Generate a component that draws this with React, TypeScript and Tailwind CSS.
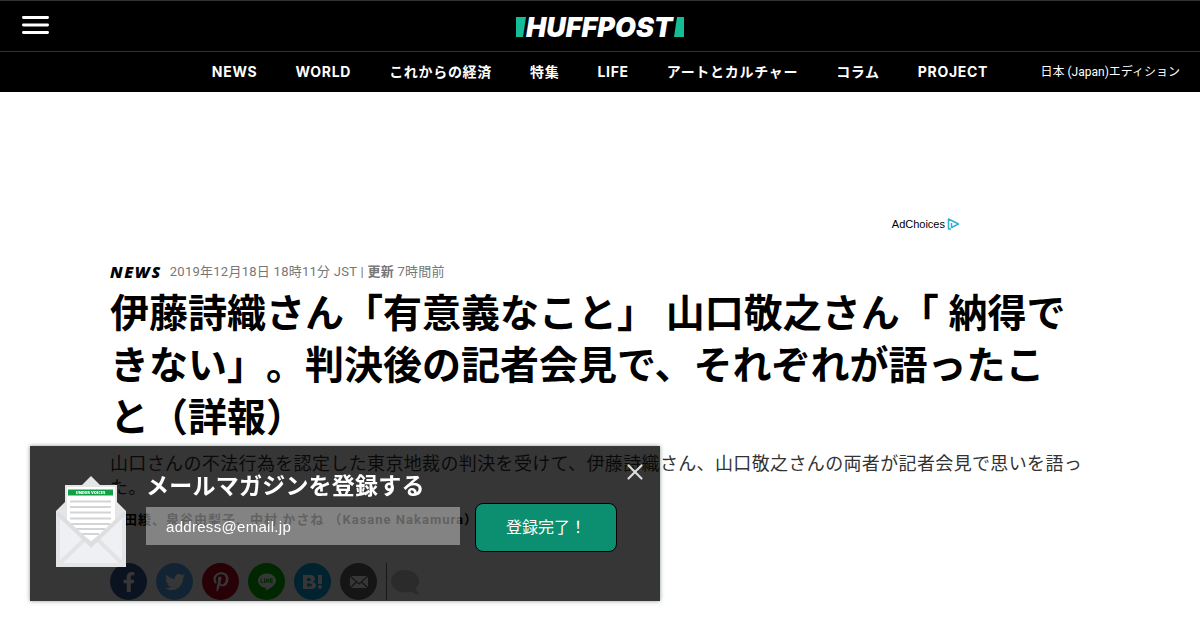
import React from 'react';
import { FaFacebookF, FaTwitter, FaPinterestP, FaComment } from 'react-icons/fa';
import { X } from 'lucide-react';

const NAV_ITEMS = ['NEWS', 'WORLD', 'これからの経済', '特集', 'LIFE', 'アートとカルチャー', 'コラム', 'PROJECT'];

const SHARES = [
  { label: 'Facebook', color: 'bg-[#3b5998]', icon: <FaFacebookF className="w-5 h-5" /> },
  { label: 'Twitter', color: 'bg-[#55acee]', icon: <FaTwitter className="w-5 h-5" /> },
  { label: 'Pinterest', color: 'bg-[#bd081c]', icon: <FaPinterestP className="w-5 h-5" /> },
  { label: 'LINE', color: 'bg-[#00b900]', icon: <LineIcon /> },
  { label: 'Hatena', color: 'bg-[#00a4de]', icon: <HatenaIcon /> },
  { label: 'Email', color: 'bg-[#666666]', icon: <MailIcon /> },
];

export default function App() {
  return (
    <div className="min-h-screen bg-white font-['Roboto','Noto_Sans_CJK_JP',sans-serif] text-black [text-spacing-trim:space-all]">
      <Header />
      <div className="mx-auto max-w-[980px]">
        <AdSlot />
        <Article />
      </div>
      <NewsletterPopup />
    </div>
  );
}

function Header() {
  return (
    <header className="bg-black text-white">
      <div className="grid grid-cols-3 items-center h-13 px-5 border-y border-[#333]">
        <button aria-label="メニュー" className="justify-self-start">
          <svg viewBox="0 0 30 20" className="w-[30px] h-5" stroke="white" strokeWidth="2.800" strokeLinecap="round">
            <path d="M3.400 1.500H27.600M3.400 9H27.600M3.400 16.500H27.600" />
          </svg>
        </button>
        <a href="#" className="justify-self-center">
          <svg viewBox="0 -9 168 36" className="w-[168px] h-9">
            <path d="M0 0H10L7 20H0Z" fill="#14bc97" />
            <path d="M161 0H168V20H158Z" fill="#14bc97" />
            <text x="10" y="20" fill="white" fontFamily="Inter, sans-serif" fontWeight="900" fontStyle="italic" fontSize="27">
              HUFFPOST
            </text>
          </svg>
        </a>
      </div>
      <div className="grid grid-cols-[1fr_auto_1fr] items-center h-10">
        <nav className="col-start-2 flex gap-[38px] text-sm font-bold font-['Inter','Noto_Sans_CJK_JP',sans-serif] tracking-wider whitespace-nowrap">
          {NAV_ITEMS.map((item) => (
            <a key={item} href="#">{item}</a>
          ))}
        </nav>
        <a href="#" className="justify-self-end pr-5 text-xs whitespace-nowrap">日本 (Japan)エディション</a>
      </div>
    </header>
  );
}

function AdSlot() {
  return (
    <div className="flex justify-end items-end h-[138px] pr-[130px]">
      <a href="#" className="flex items-center gap-0.5 text-[11px] leading-3 font-['Liberation_Sans',sans-serif]">
        AdChoices
        <svg viewBox="0 0 13 12" className="w-[13px] h-3" fill="none" stroke="#31b0cd" strokeWidth="1.500" strokeLinejoin="round">
          <path d="M4 11L1.500 11V1L11.500 6L4.500 9.500V5" />
        </svg>
      </a>
    </div>
  );
}

function Article() {
  return (
    <article className="pt-8">
      <div className="flex items-center gap-2 h-5 text-[13px] text-[#777]">
        <a href="#" className="font-['Open_Sans',sans-serif] text-base font-extrabold italic text-black tracking-widest">NEWS</a>
        <p className="tracking-[0.02em]">
          2019年12月18日 18時11分 JST | <b>更新</b> 7時間前
        </p>
      </div>
      <h1 className="mt-[6px] pr-2 text-[39px] leading-[52px] font-bold">
        伊藤詩織さん「有意義なこと」 山口敬之さん「 納得できない」。判決後の記者会見で、それぞれが語ったこと（詳報）
      </h1>
      <p className="mt-2 text-lg leading-6 tracking-[0.02em] text-[#333]">
        山口さんの不法行為を認定した東京地裁の判決を受けて、伊藤詩織さん、山口敬之さんの両者が記者会見で思いを語った。
      </p>
      <p className="mt-2 text-[13px] leading-6 font-bold tracking-[1px]">生田綾、泉谷由梨子、中村 かさね （Kasane Nakamura）</p>
      <ShareBar />
    </article>
  );
}

function ShareBar() {
  return (
    <div className="mt-[31px] flex gap-[9px]">
      {SHARES.map((share) => (
        <a
          key={share.label}
          href="#"
          aria-label={share.label}
          className={`flex items-center justify-center w-[37px] h-[37px] rounded-full text-white ${share.color}`}
        >
          {share.icon}
        </a>
      ))}
      <a href="#" aria-label="コメント" className="flex items-center pl-1 border-l border-[#777] text-[#ccc]">
        <FaComment className="w-7 h-7 -scale-x-100" />
      </a>
    </div>
  );
}

function LineIcon() {
  return (
    <svg viewBox="0 0 20 18" className="w-5 h-[18px]">
      <path d="M10 0.500C4.800 0.500 1 3.800 1 7.800C1 11.300 4 14.200 8.300 14.800C9.500 15 9 16 8.900 17.500C12 16 19 12.500 19 7.800C19 3.800 15.200 0.500 10 0.500Z" fill="currentColor" />
      <path d="M4 5.500V9.500H6.200M7.600 5.500V10M9.200 10V5.800L11.700 9.500V5.500M15.800 5.800H13.500V9.500H15.800M13.500 7.700H15.600" fill="none" stroke="#00b900" strokeWidth="1" />
    </svg>
  );
}

function HatenaIcon() {
  return (
    <svg viewBox="0 0 20 16" className="w-5 h-4" fill="currentColor">
      <path fillRule="evenodd" d="M0 1H7Q12 1 12 5Q12 7.500 9.500 8Q13 8.500 13 11.500Q13 15 7.500 15H0ZM4 4V7H6Q8 7 8 5.500Q8 4 6 4ZM4 9.500V12.500H6.500Q9 12.500 9 11Q9 9.500 6.500 9.500Z" />
      <path d="M15 1H19V10H15Z" />
      <circle cx="17" cy="13" r="2" />
    </svg>
  );
}

function MailIcon() {
  return (
    <svg viewBox="0 0 18 12" className="w-[18px] h-3">
      <path d="M0 0H18V12H0Z" fill="currentColor" />
      <path d="M0 0L9 8L18 0M0 12L6.500 6M18 12L11.500 6" fill="none" stroke="#666" strokeWidth="1.300" />
    </svg>
  );
}

function EnvelopeArt() {
  return (
    <svg viewBox="0 0 70 91" className="w-[70px] h-[91px]">
      <path d="M0 35L35 0L70 35V91H0Z" fill="#e3e5e6" />
      <path d="M9 9H61V48L35 72L9 48Z" fill="#e3e5e6" />
      <path d="M11 11H59V47L35 65L11 47Z" fill="white" />
      <path d="M12 13.500H57V19.500H12Z" fill="#12a046" />
      <text x="34.500" y="18" textAnchor="middle" fill="white" fontFamily="Open Sans, sans-serif" fontWeight="800" fontSize="4">
        UNDER VOICES
      </text>
      <path d="M14 25.500H55M14 31H55M14 36.500H55M14 42.500H55M15 48H54M20 53H49M26 58H43" stroke="#d3d4d5" strokeWidth="2" />
      <path d="M0 36L35 70L70 36V91H0Z" fill="#eef0f3" />
      <path d="M1 90L28 64M69 90L42 64" fill="none" stroke="#e1e3e5" strokeWidth="4" />
      <path d="M2 38V89H68V38" fill="none" stroke="#e3e5e6" strokeWidth="4" />
      <path d="M1 37L35 69L69 37" fill="none" stroke="#dcdedf" strokeWidth="4" />
    </svg>
  );
}

function NewsletterPopup() {
  return (
    <section className="fixed left-[30px] bottom-[29px] w-[630px] flex items-start gap-5 pl-[26px] pt-[25px] pb-[34px] bg-black/79 text-white shadow-[0_0_4px_rgba(0,60,40,0.500)]">
      <div className="pt-[5px]">
        <EnvelopeArt />
      </div>
      <form className="flex-1">
        <label htmlFor="email" className="block text-[23px] leading-8 font-bold tracking-[0.01em]">メールマガジンを登録する</label>
        <div className="flex items-start gap-[15px]">
          <input
            id="email"
            type="email"
            placeholder="address@email.jp"
            className="mt-1 w-[314px] h-[38px] px-5 bg-white/38 text-[15px] tracking-[0.02em] text-white placeholder:text-white font-['Liberation_Sans',sans-serif]"
          />
          <button type="button" className="w-[142px] h-[49px] rounded-lg border border-black bg-[#0b8f70] text-base">登録完了！</button>
        </div>
      </form>
      <button aria-label="閉じる" className="absolute right-3 top-[13px] text-[#ddd]">
        <X className="w-[26px] h-[26px]" strokeWidth={2} />
      </button>
    </section>
  );
}
